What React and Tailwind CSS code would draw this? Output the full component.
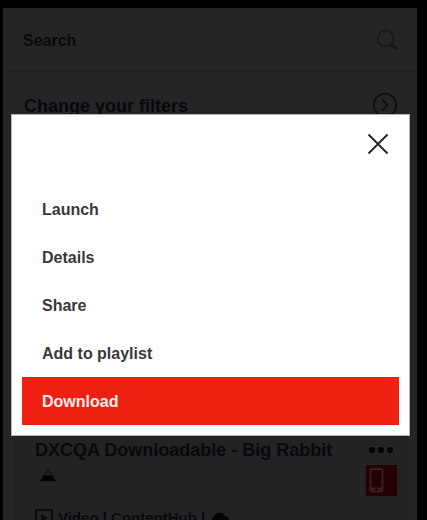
import React from "react";

const actions = ["Launch", "Details", "Share", "Add to playlist"];

function SearchIcon() {
  return (
    <svg width="22" height="22" viewBox="0 0 22 22" fill="none" stroke="#151316" aria-hidden="true">
      <circle cx="9.5" cy="9.5" r="8" strokeWidth="1.2" />
      <path d="M15 15l5.5 5" strokeWidth="2.4" />
    </svg>
  );
}

function CircleChevron() {
  return (
    <svg width="26" height="26" viewBox="0 0 26 26" fill="none" stroke="#0d0c0e" aria-hidden="true">
      <circle cx="13" cy="13" r="11.3" strokeWidth="1.7" />
      <path d="M10 7.5l5.5 5.5-5.5 5.5" strokeWidth="1.8" />
    </svg>
  );
}

function CatalogPage() {
  return (
    <main className="mr-[10px] ml-[3px] h-full overflow-hidden bg-[#262427] text-[#09080a]">
      <div className="flex h-16 items-center justify-between border-b border-[#211f22] pr-[19px] pl-5">
        <input
          type="search"
          aria-label="Search"
          placeholder="Search"
          className="min-w-0 flex-1 bg-transparent pt-0.5 text-base font-bold outline-none placeholder:text-[#09080a] placeholder:opacity-100"
        />
        <button type="button" aria-label="Submit search">
          <SearchIcon />
        </button>
      </div>
      <button
        type="button"
        className="flex h-16 w-full items-center justify-between pt-0.5 pr-[19px] pl-[21px] text-lg font-bold"
      >
        <span className="pt-0.5">Change your filters</span>
        <CircleChevron />
      </button>
      <article className="mr-[9px] ml-[11px] border border-[#222023] bg-[#242225] pt-[301px] pr-[10px] pl-5">
        <div className="flex h-6 items-center justify-between">
          <h2 className="text-lg leading-6 font-bold whitespace-nowrap">DXCQA Downloadable - Big Rabbit</h2>
          <button type="button" aria-label="More actions" className="flex gap-[3px] pr-1">
            <span className="size-[6px] rounded-full bg-[#050406]" />
            <span className="size-[6px] rounded-full bg-[#050406]" />
            <span className="size-[6px] rounded-full bg-[#050406]" />
          </button>
        </div>
        <div className="flex items-start justify-between pt-[3px]">
          <svg className="mt-[3px] ml-1" width="18" height="14" viewBox="0 0 18 14" aria-hidden="true">
            <path d="M9 1.5L15.5 12.5H2.5Z" fill="none" stroke="#121113" strokeWidth="1.4" />
            <path d="M4.5 7.5h9l3 5.5h-15z" fill="#030203" />
          </svg>
          <svg width="31" height="31" viewBox="0 0 31 31" role="img" aria-label="Mobile content">
            <path d="M0 0h31v31H0z" fill="#250002" />
            <rect x="4.5" y="4" width="12" height="22.5" rx="2" fill="none" stroke="#35201f" strokeWidth="2" />
            <path d="M4.5 22.5h12v3q0 1-1 1h-10q-1 0-1-1z" fill="#35201f" />
            <circle cx="10.5" cy="24.5" r="1.3" fill="#180001" />
          </svg>
        </div>
        <div className="flex items-center gap-[5px] pt-[10px] text-[15px] leading-6 font-bold whitespace-nowrap">
          <svg width="18" height="18" viewBox="0 0 18 18" aria-hidden="true">
            <rect x="1" y="1" width="16" height="16" fill="none" stroke="#09080a" strokeWidth="1.7" />
            <path d="M6 5l7 4-7 4z" fill="#09080a" />
          </svg>
          <span>Video | ContentHub |</span>
          <svg width="20" height="18" viewBox="0 0 20 18" fill="#030203" aria-hidden="true">
            <path d="M5 16a4.5 4.5 0 0 1-1-8.5A6 6 0 0 1 15 7a4.6 4.6 0 0 1 .5 9z" />
          </svg>
        </div>
      </article>
    </main>
  );
}

function ActionDialog() {
  return (
    <section
      role="dialog"
      aria-modal="true"
      aria-label="Item actions"
      className="absolute top-[114px] right-[17px] left-[11px] border border-[#b4b3b5] bg-white px-[10px] pb-[10px] text-base font-bold text-[#39373a]"
    >
      <div className="flex h-[70px] items-start justify-end pt-[18px] pr-[10px]">
        <button type="button" aria-label="Close" className="text-[#242225]">
          <svg width="22" height="22" viewBox="0 0 22 22" fill="none" stroke="currentColor" strokeWidth="1.9" aria-hidden="true">
            <path d="M1.5 1.5l19 19M20.5 1.5l-19 19" />
          </svg>
        </button>
      </div>
      <div className="flex flex-col">
        {actions.map((label) => (
          <button key={label} type="button" className="h-12 px-5 pt-0.5 text-left">
            {label}
          </button>
        ))}
        <button type="button" className="h-12 bg-[#ee2012] px-5 pt-0.5 text-left text-[#fff0ec]">
          Download
        </button>
      </div>
    </section>
  );
}

export default function App() {
  return (
    <div className="relative h-screen overflow-hidden bg-black pt-2 font-['Liberation_Sans',Arial,sans-serif]">
      <CatalogPage />
      <ActionDialog />
    </div>
  );
}
